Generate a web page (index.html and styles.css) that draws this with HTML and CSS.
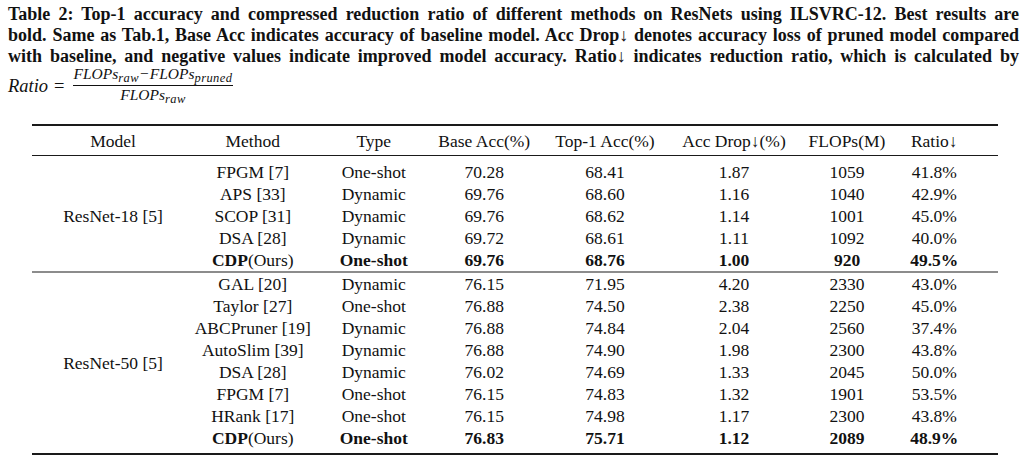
FILE: index.html
```html
<!DOCTYPE html>
<html lang="en">
<head>
<meta charset="utf-8">
<title>Table 2</title>
<link rel="stylesheet" href="styles.css">
</head>
<body>
<div class="page">
  <div class="caption">
    <div class="cap-line">Table 2: Top-1 accuracy and compressed reduction ratio of different methods on ResNets using ILSVRC-12. Best results are</div>
    <div class="cap-line">bold. Same as Tab.1, Base Acc indicates accuracy of baseline model. Acc Drop↓ denotes accuracy loss of pruned model compared</div>
    <div class="cap-line">with baseline, and negative values indicate improved model accuracy. Ratio↓ indicates reduction ratio, which is calculated by</div>
    <div class="formula">
      <span class="mi">Ratio</span><span class="eq">=</span>
      <span class="frac">
        <span class="num"><span class="mi">FLOPs</span><sub class="mi">raw</sub><span class="minus">−</span><span class="mi">FLOPs</span><sub class="mi">pruned</sub></span>
        <span class="den"><span class="mi">FLOPs</span><sub class="mi">raw</sub></span>
      </span>
    </div>
  </div>

  <table class="results">
    <colgroup>
      <col class="w1"><col class="w2"><col class="w3"><col class="w4"><col class="w5"><col class="w6"><col class="w7"><col class="w8">
    </colgroup>
    <thead>
      <tr>
        <th class="c1">Model</th><th class="c2">Method</th><th class="c3">Type</th><th class="c4">Base Acc(%)</th><th class="c5">Top-1 Acc(%)</th><th class="c6">Acc Drop↓(%)</th><th class="c7">FLOPs(M)</th><th class="c8">Ratio↓</th>
      </tr>
    </thead>
    <tbody class="g1">
      <tr class="first"><td class="c1" rowspan="5">ResNet-18 [5]</td><td class="c2">FPGM [7]</td><td class="c3">One-shot</td><td class="c4">70.28</td><td class="c5">68.41</td><td class="c6">1.87</td><td class="c7">1059</td><td class="c8">41.8%</td></tr>
      <tr><td class="c2">APS [33]</td><td class="c3">Dynamic</td><td class="c4">69.76</td><td class="c5">68.60</td><td class="c6">1.16</td><td class="c7">1040</td><td class="c8">42.9%</td></tr>
      <tr><td class="c2">SCOP [31]</td><td class="c3">Dynamic</td><td class="c4">69.76</td><td class="c5">68.62</td><td class="c6">1.14</td><td class="c7">1001</td><td class="c8">45.0%</td></tr>
      <tr><td class="c2">DSA [28]</td><td class="c3">Dynamic</td><td class="c4">69.72</td><td class="c5">68.61</td><td class="c6">1.11</td><td class="c7">1092</td><td class="c8">40.0%</td></tr>
      <tr><td class="c2"><b>CDP</b>(Ours)</td><td class="c3"><b>One-shot</b></td><td class="c4"><b>69.76</b></td><td class="c5"><b>68.76</b></td><td class="c6"><b>1.00</b></td><td class="c7"><b>920</b></td><td class="c8"><b>49.5%</b></td></tr>
    </tbody>
    <tbody class="g2">
      <tr class="first"><td class="c1" rowspan="8">ResNet-50 [5]</td><td class="c2">GAL [20]</td><td class="c3">Dynamic</td><td class="c4">76.15</td><td class="c5">71.95</td><td class="c6">4.20</td><td class="c7">2330</td><td class="c8">43.0%</td></tr>
      <tr><td class="c2">Taylor [27]</td><td class="c3">One-shot</td><td class="c4">76.88</td><td class="c5">74.50</td><td class="c6">2.38</td><td class="c7">2250</td><td class="c8">45.0%</td></tr>
      <tr><td class="c2">ABCPruner [19]</td><td class="c3">Dynamic</td><td class="c4">76.88</td><td class="c5">74.84</td><td class="c6">2.04</td><td class="c7">2560</td><td class="c8">37.4%</td></tr>
      <tr><td class="c2">AutoSlim [39]</td><td class="c3">Dynamic</td><td class="c4">76.88</td><td class="c5">74.90</td><td class="c6">1.98</td><td class="c7">2300</td><td class="c8">43.8%</td></tr>
      <tr><td class="c2">DSA [28]</td><td class="c3">Dynamic</td><td class="c4">76.02</td><td class="c5">74.69</td><td class="c6">1.33</td><td class="c7">2045</td><td class="c8">50.0%</td></tr>
      <tr><td class="c2">FPGM [7]</td><td class="c3">One-shot</td><td class="c4">76.15</td><td class="c5">74.83</td><td class="c6">1.32</td><td class="c7">1901</td><td class="c8">53.5%</td></tr>
      <tr><td class="c2">HRank [17]</td><td class="c3">One-shot</td><td class="c4">76.15</td><td class="c5">74.98</td><td class="c6">1.17</td><td class="c7">2300</td><td class="c8">43.8%</td></tr>
      <tr class="last"><td class="c2"><b>CDP</b>(Ours)</td><td class="c3"><b>One-shot</b></td><td class="c4"><b>76.83</b></td><td class="c5"><b>75.71</b></td><td class="c6"><b>1.12</b></td><td class="c7"><b>2089</b></td><td class="c8"><b>48.9%</b></td></tr>
    </tbody>
  </table>
</div>
</body>
</html>
```

FILE: styles.css
```css
html, body {
  margin: 0;
  padding: 0;
  background: #ffffff;
}

.page {
  padding: 4px 0 0 0;
  font-family: "Liberation Serif", "Times New Roman", serif;
  color: #111111;
}

.caption {
  width: 1011px;
  margin-left: 8px;
  font-size: 18px;
  line-height: 21px;
  font-weight: bold;
}

.cap-line {
  text-align: justify;
  text-align-last: justify;
  word-spacing: -2px;
}

.formula {
  display: flex;
  align-items: center;
  font-weight: normal;
  height: 38px;
  margin-top: 0;
}

.mi {
  font-style: italic;
}

.formula > .mi {
  font-size: 18.5px;
}

.eq {
  margin: 0 8px 0 6px;
  font-size: 18.5px;
}

.frac {
  display: inline-flex;
  flex-direction: column;
  align-items: center;
  font-size: 15.5px;
  line-height: 16px;
  margin-top: -3px;
}

.num {
  padding: 0 1px 3px;
  border-bottom: 1px solid #111111;
}

.den {
  padding-top: 1px;
}

.frac sub {
  font-size: 12.5px;
  vertical-align: -3px;
  line-height: 0;
  letter-spacing: 0.4px;
}

.minus {
  margin: 0 1px;
}

.results {
  border-collapse: collapse;
  table-layout: fixed;
  width: 966px;
  margin: 19px 0 0 32px;
  font-size: 17.5px;
  line-height: 22px;
}

.w1 { width: 151px; }
.w2 { width: 130.5px; }
.w3 { width: 115.5px; }
.w4 { width: 115.5px; }
.w5 { width: 125px; }
.w6 { width: 121px; }
.w7 { width: 100px; }
.w8 { width: 107.5px; }

.results th,
.results td {
  padding: 0;
  text-align: center;
  white-space: nowrap;
  font-weight: normal;
  vertical-align: middle;
}

.results b {
  font-weight: bold;
}

.results .c1 { padding-left: 11px; }
.results .c2 { padding-left: 9px; }
.results .c3 { padding-left: 5px; }
.results .c4 { padding-right: 5px; }
.results .c5 { padding-right: 4px; }
.results .c6 { padding-left: 8px; }
.results .c7 { padding-left: 13px; }
.results .c8 { padding-right: 20px; }

.results thead tr {
  border-top: 2px solid #1a1a1a;
  border-bottom: 1px solid #1a1a1a;
}

.results thead th {
  padding-top: 4px;
  padding-bottom: 3px;
}

.results .g1 .first td {
  padding-top: 5px;
}

.results .g2 {
  border-top: 2px solid #8c8c8c;
}

.results .g2 .last td {
  padding-bottom: 4px;
}

.results .g2 .last {
  border-bottom: 2px solid #1a1a1a;
}
```
